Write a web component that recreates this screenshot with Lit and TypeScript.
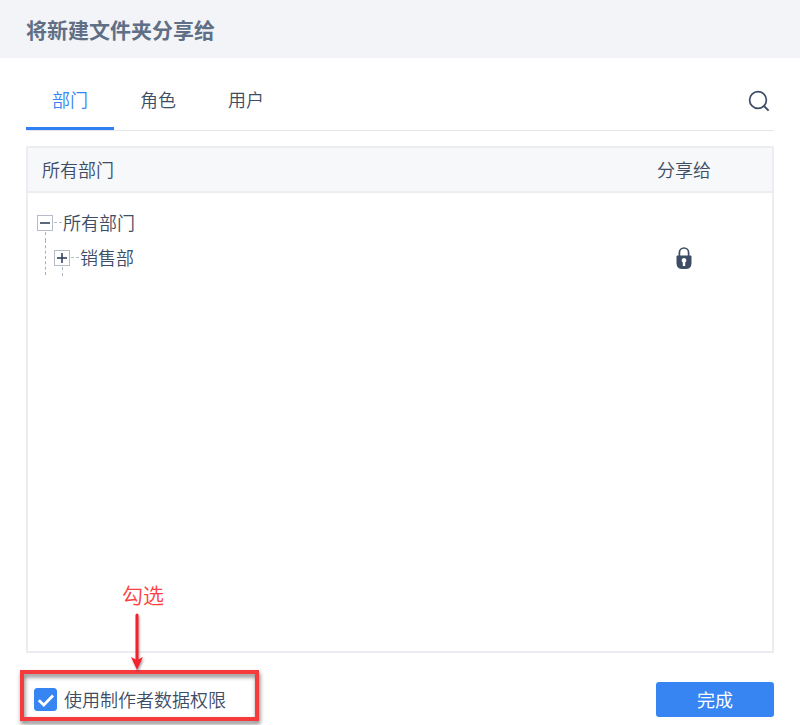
import { LitElement, html, css, svg } from "lit";
import { customElement, state } from "lit/decorators.js";

const TABS = ["部门", "角色", "用户"];

@customElement("tree-toggle")
class TreeToggle extends LitElement {
  static properties = { open: { type: Boolean }, label: { type: String } };
  declare open: boolean;
  declare label: string;

  static styles = css`
    :host { display: block; }
    .toggle {
      display: block;
      box-sizing: border-box;
      width: 16px;
      height: 16px;
      padding: 0;
      border: 1px solid #b5bbc8;
      background: #fff;
      cursor: pointer;
    }
    .glyph { display: block; width: 14px; height: 14px; }
  `;

  render() {
    return html`<button class="toggle" aria-label=${this.label} aria-expanded=${this.open ? "true" : "false"}>
      <svg class="glyph" viewBox="0 0 14 14" stroke="#33425c" stroke-width="1.6" fill="none">
        <path d="M2 7H12" />
        ${this.open ? null : svg`<path d="M7 2V12" />`}
      </svg>
    </button>`;
  }
}

@customElement("app-root")
class AppRoot extends LitElement {
  @state() private active = 0;
  @state() private checked = true;

  static styles = css`
    :host {
      display: flex;
      flex-direction: column;
      box-sizing: border-box;
      min-height: 100vh;
      background: #fff;
      color: #3d4d66;
      font-family: "Noto Sans CJK SC", "Noto Sans", sans-serif;
      font-size: 18px;
      font-weight: 350;
      line-height: 24px;
    }
    .title-bar { padding: 15px 26px; background: #f2f4f7; }
    .title {
      margin: 0;
      font-size: 21px;
      line-height: 28px;
      font-weight: 700;
      color: #606f85;
    }
    .content {
      flex: 1;
      display: flex;
      flex-direction: column;
      padding: 15px 26px 8px;
    }
    .tabs {
      display: flex;
      align-items: stretch;
      height: 57px;
      border-bottom: 1px solid #e4e6eb;
    }
    .tab {
      width: 88px;
      padding: 0 0 2px;
      border: 0;
      border-bottom: 3px solid transparent;
      background: none;
      color: inherit;
      font: inherit;
      cursor: pointer;
    }
    .tab.active { color: #3685f2; border-bottom-color: #2f80f5; }
    .search {
      margin-left: auto;
      padding: 0 4px 1px 0;
      border: 0;
      background: none;
      cursor: pointer;
    }
    .search-icon { display: block; width: 22px; height: 22px; }
    .panel {
      flex: 1;
      margin-top: 15px;
      border: 2px solid #ebedf1;
    }
    .grid { width: 100%; border-collapse: collapse; table-layout: fixed; }
    .grid th {
      height: 41px;
      padding: 0 0 2px;
      border-bottom: 2px solid #ebedf1;
      background: #f6f8fa;
      font-weight: inherit;
    }
    .grid th.name { padding-left: 14px; text-align: left; }
    .grid .share { width: 176px; text-align: center; }
    .grid td { height: 35px; padding: 0; }
    .grid .gap td { height: 12px; }
    .node { display: flex; height: 35px; padding-left: 9px; align-items: center; }
    .node-label { padding-bottom: 2px; }
    .branch { width: 8px; height: 0; margin: 0 1px; border-top: 1px dashed #b5bbc8; }
    .guide {
      align-self: stretch;
      width: 9px;
      margin-left: 8px;
      border-left: 1px dashed #a9b0be;
      box-sizing: border-box;
    }
    .stem { position: relative; }
    .stem::after {
      content: "";
      position: absolute;
      left: 8px;
      top: 17px;
      height: 9px;
      border-left: 1px dashed #a9b0be;
    }
    .lock { display: block; width: 16px; height: 22px; margin: 0 auto; }
    .footer {
      display: flex;
      align-items: center;
      justify-content: space-between;
      margin-top: 29px;
    }
    .option {
      position: relative;
      display: flex;
      align-items: center;
      gap: 7px;
      margin-left: 8px;
      cursor: pointer;
    }
    .option-label { padding-bottom: 2px; }
    .check {
      appearance: none;
      box-sizing: border-box;
      width: 23px;
      height: 23px;
      margin: 0;
      border: 1px solid #bfc4d0;
      border-radius: 3px;
    }
    .check:checked { background: #3685f2; border-color: #3685f2; }
    .tick {
      position: absolute;
      left: 0;
      width: 23px;
      height: 23px;
      pointer-events: none;
    }
    .callout {
      position: absolute;
      inset: -17px -33px -8px -14px;
      border: 4px solid #f53b3e;
      filter: drop-shadow(1px 3px 2px rgba(0, 0, 0, 0.5));
      pointer-events: none;
    }
    .hint {
      position: absolute;
      left: 87px;
      bottom: 41px;
      display: flex;
      flex-direction: column;
      align-items: center;
      width: 44px;
      color: #fb4141;
      font-size: 21px;
      line-height: 28px;
      pointer-events: none;
    }
    .arrow {
      width: 20px;
      height: 60px;
      margin: 4px 12px 0 0;
      filter: drop-shadow(1px 2px 1px rgba(0, 0, 0, 0.35));
    }
    .done {
      width: 118px;
      height: 35px;
      padding: 0 0 2px;
      border: 0;
      border-radius: 3px;
      background: #3685f2;
      color: #fff;
      font: inherit;
      font-weight: 400;
      cursor: pointer;
    }
  `;

  render() {
    return html`
      <header class="title-bar"><h1 class="title">将新建文件夹分享给</h1></header>
      <main class="content">
        <nav class="tabs" role="tablist">
          ${TABS.map(
            (name, i) => html`<button
              class="tab ${i === this.active ? "active" : ""}"
              role="tab"
              aria-selected=${i === this.active ? "true" : "false"}
              @click=${() => (this.active = i)}
            >${name}</button>`
          )}
          <button class="search" aria-label="搜索">
            <svg class="search-icon" viewBox="0 0 22 22" fill="none" stroke="#3d4d66" stroke-width="1.7">
              <circle cx="10" cy="10" r="8.4" />
              <path d="M15.6 15.6L20.6 20.6" stroke-width="2" />
            </svg>
          </button>
        </nav>
        <section class="panel">
          <table class="grid">
            <thead>
              <tr><th class="name" scope="col">所有部门</th><th class="share" scope="col">分享给</th></tr>
            </thead>
            <tbody>
              <tr class="gap"><td colspan="2"></td></tr>
              <tr>
                <td>
                  <div class="node">
                    <span class="stem"><tree-toggle open label="收起"></tree-toggle></span>
                    <span class="branch"></span><span class="node-label">所有部门</span>
                  </div>
                </td>
                <td class="share"></td>
              </tr>
              <tr>
                <td>
                  <div class="node">
                    <span class="guide"></span>
                    <span class="stem"><tree-toggle label="展开"></tree-toggle></span>
                    <span class="branch"></span><span class="node-label">销售部</span>
                  </div>
                </td>
                <td class="share">
                  <svg class="lock" viewBox="0 0 16 22">
                    <path d="M3.4 10V5.6a4.6 4.6 0 0 1 9.2 0V10" fill="none" stroke="#3d4d66" stroke-width="1.7" />
                    <path d="M1.5 8.6h13q1 0 1 1v6.4q0 6-6 6h-3q-6 0-6-6v-6.4q0-1 1-1z" fill="#3d4d66" />
                    <path d="M8 11a2.5 2.5 0 0 1 1.2 4.6V19H6.8v-3.4A2.5 2.5 0 0 1 8 11z" fill="#fff" />
                  </svg>
                </td>
              </tr>
            </tbody>
          </table>
        </section>
        <footer class="footer">
          <label class="option">
            <input
              class="check"
              type="checkbox"
              .checked=${this.checked}
              @change=${(e: Event) => (this.checked = (e.target as HTMLInputElement).checked)}
            />
            ${this.checked
              ? html`<svg class="tick" viewBox="0 0 23 23" fill="none" stroke="#fff" stroke-width="2.8">
                  <path d="M4.8 12.2L9.8 17L19 7.6" />
                </svg>`
              : null}
            <span class="option-label">使用制作者数据权限</span>
            <span class="callout"></span>
            <span class="hint">
              勾选
              <svg class="arrow" viewBox="0 0 20 60">
                <path d="M10 3V48" stroke="#f5222d" stroke-width="3" stroke-linecap="round" />
                <path d="M4 45L10 48L16 45L10 58z" fill="#f5222d" />
              </svg>
            </span>
          </label>
          <button class="done">完成</button>
        </footer>
      </main>
    `;
  }
}
